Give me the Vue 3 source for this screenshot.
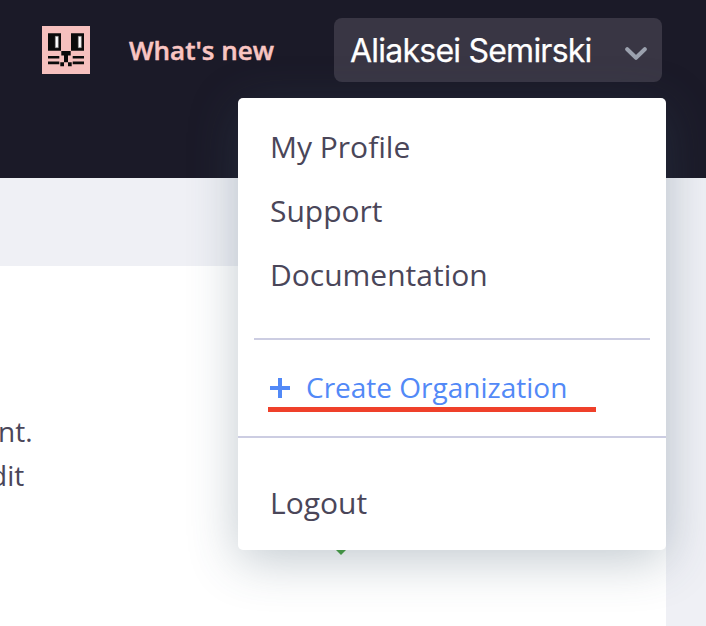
<script setup>
const links = ['My Profile', 'Support', 'Documentation']
</script>

<template>
  <div class="screen">
    <header class="topbar">
      <svg class="logo" viewBox="0 0 48 48" width="48" height="48">
        <rect width="48" height="48" fill="#f6c0be" />
        <path
          fill="#0b0b0b"
          d="M6 7.2h13v17.6H6zM29 7.2h13v17.6H29zM19.3 25h9.4v4.5H26v6.8h3.7v4H26v-4h-4v4h-3.7v-4H22v-6.8h-2.7zM6 30h11.3v2.5H6zM6 35.6h11.3v2.6H6zM30.7 30H42v2.5H30.7zM30.7 35.6H42v2.6H30.7z"
        />
        <path fill="#fff" stroke="#8a8585" stroke-width=".6" d="M13.3 10.3h3v11.4h-3zM36.3 10.3h3v11.4h-3z" />
      </svg>
      <span class="news">What's new</span>
      <button class="user">
        <span class="name">Aliaksei Semirski</span>
        <svg class="chevron" viewBox="0 0 22 14" width="22" height="14">
          <path d="M2.2 2.2 11 10.8 19.8 2.2" fill="none" stroke="#9ba1ae" stroke-width="4" stroke-linecap="round" stroke-linejoin="round" />
        </svg>
      </button>
    </header>

    <main class="page">
      <section class="content">
        <p class="copy">
          <span class="line first">nt.</span>
          <span class="line second">dit</span>
        </p>
      </section>
    </main>

    <span class="marker"></span>

    <nav class="menu">
      <a v-for="link in links" :key="link" class="item">{{ link }}</a>
      <hr class="divider inset" />
      <a class="create">
        <svg viewBox="0 0 20 20" width="20" height="20">
          <path d="M8 0h4v8h8v4h-8v8H8v-8H0V8h8z" fill="#5289f7" />
        </svg>
        <span class="label">Create Organization</span>
      </a>
      <hr class="divider" />
      <a class="item logout">Logout</a>
      <span class="underline"></span>
    </nav>
  </div>
</template>

<style>
body {
  margin: 0;
}
</style>

<style scoped>
.screen {
  position: relative;
  width: 706px;
  height: 626px;
  overflow: hidden;
  display: flex;
  flex-direction: column;
  background: #eff0f5;
  color: #4a4659;
  font-family: "Open Sans", "Noto Sans", sans-serif;
}
.topbar {
  box-sizing: border-box;
  height: 178px;
  flex: none;
  display: flex;
  align-items: flex-start;
  padding: 18px 44px 0 42px;
  background: #1b1a28;
}
.logo {
  margin-top: 8px;
  flex: none;
}
.news {
  margin-left: 39px;
  line-height: 64px;
  font-size: 26px;
  font-weight: 600;
  color: #f9c5c2;
  -webkit-text-stroke: 0.5px #f9c5c2;
  white-space: nowrap;
}
.user {
  box-sizing: border-box;
  width: 328px;
  height: 64px;
  margin-left: auto;
  padding: 0 15px 0 16px;
  display: flex;
  align-items: center;
  justify-content: space-between;
  border: 0;
  border-radius: 8px;
  background: #393644;
}
.name {
  padding-top: 2px;
  font-family: Inter, Roboto, sans-serif;
  font-size: 32px;
  line-height: 62px;
  letter-spacing: -0.77px;
  color: #fff;
  -webkit-text-stroke: 0.25px #fff;
  white-space: nowrap;
}
.chevron {
  margin-top: 7px;
}
.page {
  flex: 1;
  display: flex;
  padding: 88px 40px 0 0;
}
.content {
  flex: 1;
  background: #fff;
}
.copy {
  margin: 143px 0 0;
  font-size: 28px;
  line-height: 44px;
}
.line {
  display: block;
}
.first {
  margin-left: -2px;
}
.second {
  margin-left: -10px;
}
.marker {
  position: absolute;
  left: 321px;
  top: 535px;
  border: 20px solid transparent;
  border-top-color: #47a23f;
  border-bottom: 0;
}
.menu {
  position: absolute;
  left: 238px;
  top: 98px;
  box-sizing: border-box;
  width: 428px;
  height: 452px;
  padding: 17px 0 15px;
  border-radius: 5px;
  background: #fff;
  box-shadow: 0 10px 50px rgba(56, 82, 100, 0.31);
}
.item {
  display: block;
  padding: 0 32px;
  font-size: 30px;
  line-height: 64px;
}
.divider {
  height: 2px;
  margin: 0;
  border: 0;
  background: #cccde2;
}
.inset {
  margin: 31px 16px 0;
}
.create {
  display: flex;
  align-items: center;
  height: 96px;
  gap: 16px;
  padding: 0 32px;
  font-size: 28px;
  color: #5289f7;
  white-space: nowrap;
}
.label {
  padding-bottom: 2px;
}
.logout {
  margin-top: 33px;
}
.underline {
  position: absolute;
  left: 30px;
  top: 309px;
  width: 328px;
  height: 5px;
  background: #ef402a;
}
</style>
